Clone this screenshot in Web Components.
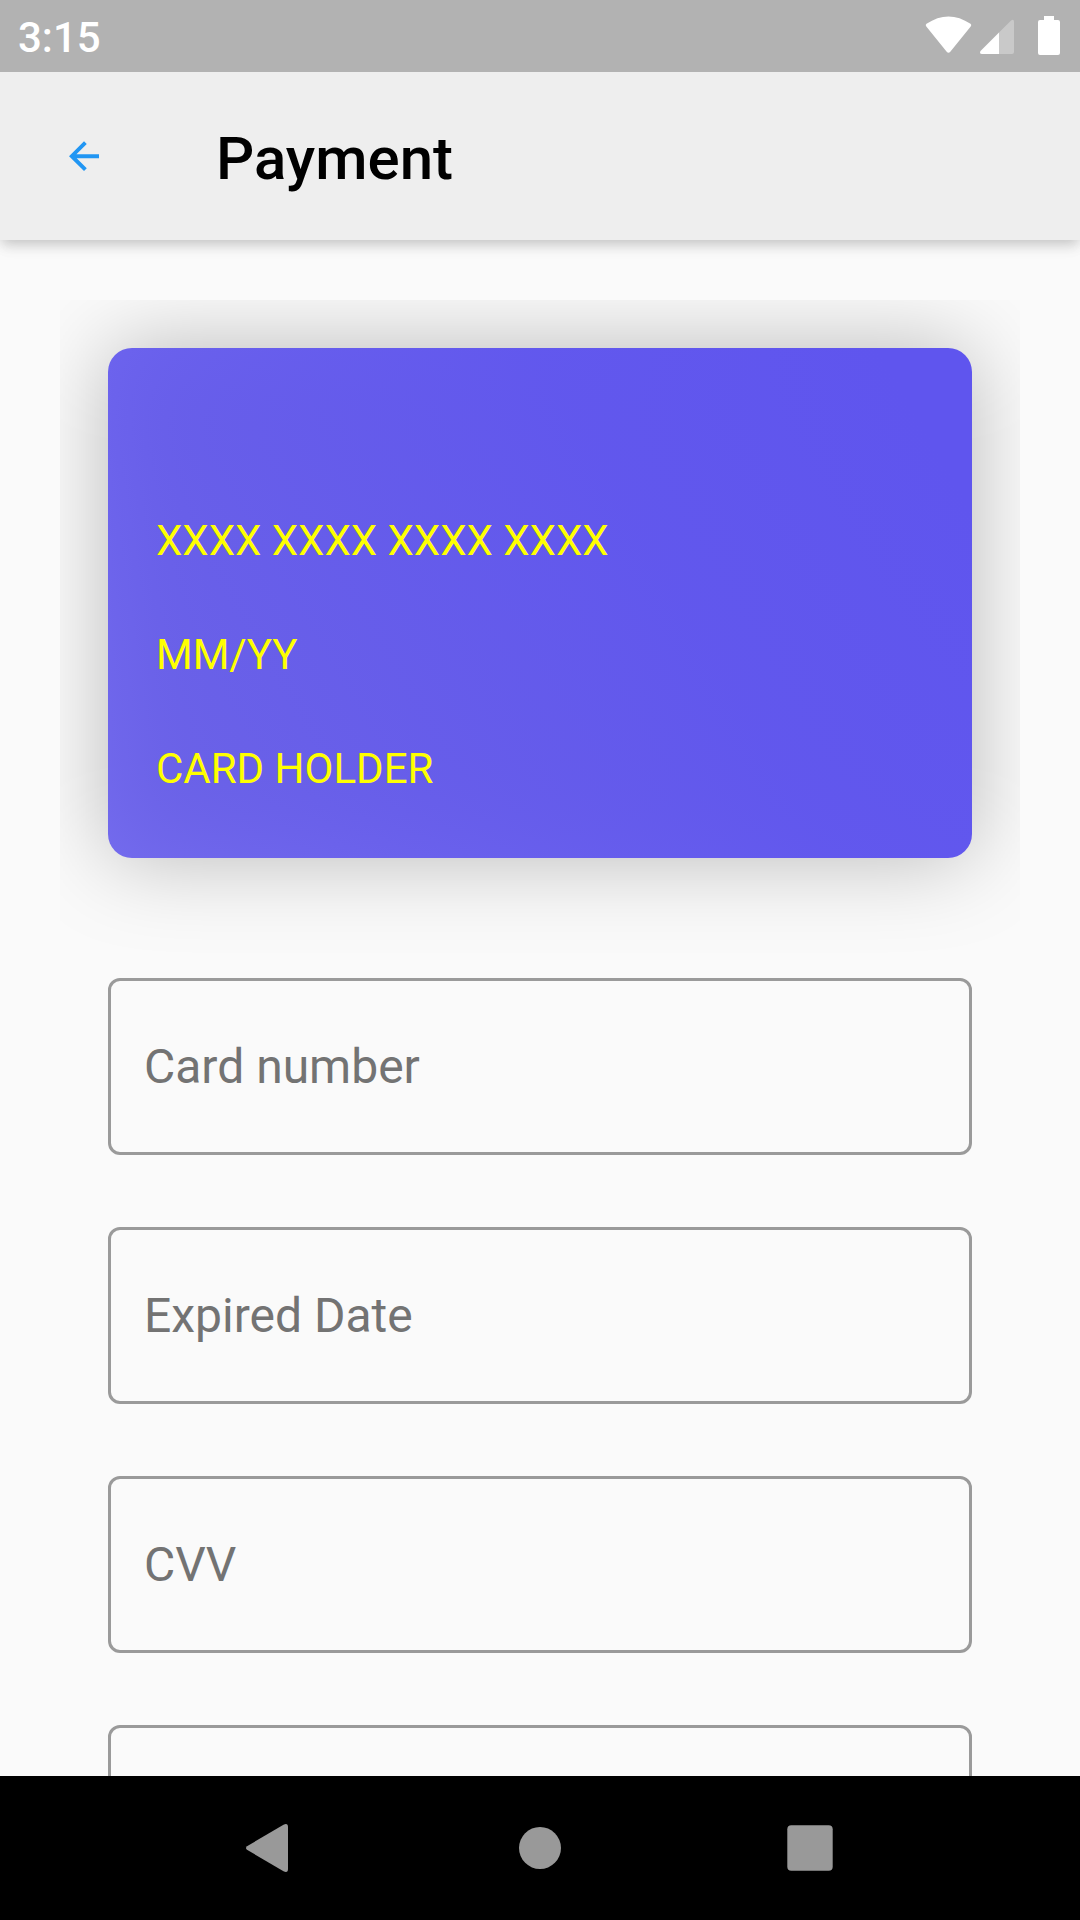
<!DOCTYPE html>
<html lang="en"><head><meta charset="utf-8"><title>Payment</title>
<style>
html,body{margin:0;height:100%;background:#fafafa}
body{font-family:Roboto,sans-serif;overflow:hidden}
</style></head><body>
<payment-screen></payment-screen>
<script>
const define=(name,html)=>customElements.define(name,class extends HTMLElement{
  constructor(){super();this.attachShadow({mode:'open'}).innerHTML=html;}
});
define('status-bar',`<style>
:host{display:flex;align-items:center;justify-content:space-between;height:72px;flex:none;background:#b2b2b2;color:#fff;box-sizing:border-box;padding:0 0 0 18px;position:relative;z-index:2}
span{font-size:42px;line-height:50px;font-weight:500;padding-top:4px}svg{display:block}
</style><span>3:15</span>
<svg width="160" height="72" viewBox="920 0 160 72" fill="#fff"><path d="M926.3 26.5Q925 25 926.5 23.8C941 14 956 14 970.500 23.800Q972 25 970.700 26.500L950.300 51.700Q948.500 53.700 946.700 51.700Z"/><path opacity=".3" d="M999 32.500L1010.800 20.700Q1014 18.500 1014 22V52Q1014 54 1012 54H999Z"/><path d="M999 32.500V54H982Q979 54 980.500 51Z"/><path d="M1044 16h10v4h4q2 0 2 2v31q0 2-2 2h-18q-2 0-2-2v-31q0-2 2-2h4Z"/></svg>`);
define('app-bar',`<style>
:host{display:flex;align-items:center;height:168px;flex:none;background:#eee;box-sizing:border-box;padding-left:66px;position:relative;z-index:1;box-shadow:0 6px 12px -3px rgba(0,0,0,.12),0 12px 15px 0 rgba(0,0,0,.02),0 3px 15px 0 rgba(0,0,0,.12)}
svg{display:block;width:36px;margin-right:114px}
h1{margin:0;font-size:60px;line-height:70px;font-weight:500;color:#000;padding-top:5px}
</style><svg height="36" viewBox="66 138 36 36" fill="none" stroke="#2196f3" stroke-width="3.900"><path d="M99 156.200H72M85.400 142.700L71.800 156.200L85.400 169.700"/></svg><h1><slot></slot></h1>`);
define('credit-card',`<style>
:host{display:block;height:660px;padding:48px;box-sizing:border-box;overflow:hidden;isolation:isolate}
.card{position:relative;height:510px;box-sizing:border-box;padding:168px 48px 0;border-radius:24px;background:linear-gradient(59.450deg,rgba(95,85,238,.855),rgba(95,85,238,.975) 62%,rgb(95,85,238) 92%);color:#ff0;font-size:42px;line-height:50px;display:flex;flex-direction:column;gap:64px}
.card::before{content:"";position:absolute;z-index:-1;inset:0;border-radius:24px;background:rgba(0,0,0,.26);filter:blur(44px)}
</style><div class="card"><slot></slot></div>`);
define('text-field',`<style>
:host{display:flex;align-items:center;height:177px;flex:none;box-sizing:border-box;border:3px solid #9a9a9a;border-radius:12px;padding:0 33px;font-size:48px;line-height:56px;color:#737373}
</style><span><slot></slot></span>`);
define('nav-bar',`<style>
:host{display:flex;align-items:center;justify-content:center;height:144px;flex:none;background:#000;position:relative;z-index:1}svg{display:block}
</style><svg width="640" height="144" viewBox="220 1776 640 144" fill="#999"><path d="M247 1846.200L283.500 1824.700Q288 1822.700 288 1827V1869Q288 1873.300 283.500 1871.300L247 1849.800Q245 1848 247 1846.200Z"/><circle cx="540" cy="1848" r="21"/><rect x="787.300" y="1825.300" width="45.400" height="45.400" rx="4"/></svg>`);
define('payment-screen',`<style>
:host{display:flex;flex-direction:column;width:1080px;height:1920px;background:#fafafa}
main{flex:1;min-height:0;overflow:hidden;padding:60px 60px 0}
.fields{display:flex;flex-direction:column;gap:72px;padding:18px 48px 0}
</style><status-bar></status-bar><app-bar>Payment</app-bar>
<main><credit-card><div>XXXX XXXX XXXX XXXX</div><div>MM/YY</div><div>CARD HOLDER</div></credit-card>
<div class="fields"><text-field>Card number</text-field><text-field>Expired Date</text-field><text-field>CVV</text-field><text-field></text-field></div></main>
<nav-bar></nav-bar>`);
</script></body></html>
